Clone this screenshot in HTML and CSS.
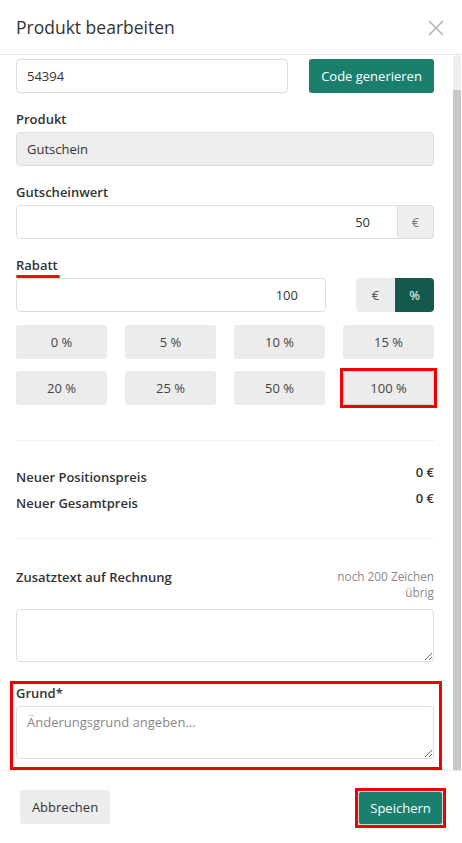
FILE: index.html
```html
<!DOCTYPE html>
<html lang="de">
<head>
<meta charset="utf-8">
<link rel="stylesheet" href="styles.css">
</head>
<body>
<div class="modal">
  <header class="modal-header">
    <h1 class="title">Produkt bearbeiten</h1>
    <button class="close" aria-label="Schließen">
      <svg width="16" height="16" viewBox="0 0 16 16"><path d="M1 1 L15 15 M15 1 L1 15" stroke="#b5b5b5" stroke-width="1.6" fill="none"/></svg>
    </button>
  </header>
  <div class="modal-main">
    <div class="content">
      <div class="code-row">
        <div class="input code-input">54394</div>
        <button class="btn btn-primary">Code generieren</button>
      </div>

      <label class="label">Produkt</label>
      <div class="input disabled">Gutschein</div>

      <label class="label">Gutscheinwert</label>
      <div class="input-group">
        <div class="input right grow">50</div>
        <div class="addon">€</div>
      </div>

      <label class="label"><span class="mark">Rabatt</span></label>
      <div class="rabatt-row">
        <div class="input right rabatt-input">100</div>
        <div class="toggle">
          <button class="tog">€</button>
          <button class="tog active">%</button>
        </div>
      </div>

      <div class="presets">
        <button class="preset">0 %</button>
        <button class="preset">5 %</button>
        <button class="preset">10 %</button>
        <button class="preset">15 %</button>
        <button class="preset">20 %</button>
        <button class="preset">25 %</button>
        <button class="preset">50 %</button>
        <button class="preset highlighted">100 %</button>
      </div>

      <hr class="divider first">

      <div class="prices">
        <div class="price-row">
          <span class="price-label">Neuer Positionspreis</span>
          <span class="price-value">0 €</span>
        </div>
        <div class="price-row">
          <span class="price-label">Neuer Gesamtpreis</span>
          <span class="price-value">0 €</span>
        </div>
      </div>

      <hr class="divider second">

      <div class="zusatz-head">
        <span class="label-inline">Zusatztext auf Rechnung</span>
        <span class="counter">noch 200 Zeichen<br>übrig</span>
      </div>
      <textarea class="textarea zusatz"></textarea>

      <div class="grund-box">
        <label class="label grund-label">Grund*</label>
        <textarea class="textarea grund" placeholder="Änderungsgrund angeben..."></textarea>
      </div>
    </div>
    <div class="scrollbar">
      <div class="thumb"></div>
    </div>
  </div>
  <footer class="modal-footer">
    <button class="btn btn-light">Abbrechen</button>
    <button class="btn btn-primary save">Speichern</button>
  </footer>
</div>
</body>
</html>
```

FILE: styles.css
```css
* { box-sizing: border-box; }
html, body { margin: 0; padding: 0; background: #fff; }
body {
  font-family: "Open Sans", "Noto Sans", sans-serif;
  color: #333;
  font-size: 13px;
  width: 462px;
  height: 843px;
  overflow: hidden;
}
.modal { display: flex; flex-direction: column; height: 843px; }

.modal-header {
  height: 55px;
  border-bottom: 1px solid #e9e9e9;
  display: flex;
  align-items: center;
  justify-content: space-between;
  padding: 0 18px 0 16px;
  flex: none;
}
.title { margin: 0; font-size: 17.5px; font-weight: 400; color: #333; }
.close { border: 0; background: none; padding: 0; display: flex; margin-top: 1px; }

.modal-main { flex: none; height: 715px; display: flex; overflow: hidden; }
.content { flex: 1; padding: 4px 19px 0 16px; display: flex; flex-direction: column; }
.scrollbar {
  width: 8px;
  margin-right: 1px;
  background: #eeeeee;
  border-radius: 4px 4px 0 0;
  display: flex;
  flex-direction: column;
  padding-top: 35px;
}
.thumb { flex: 1; background: #c8c8c8; }

.input {
  height: 34px;
  border: 1px solid #dddddd;
  border-radius: 4px;
  padding: 0 10px;
  display: flex;
  align-items: center;
  font-size: 13px;
  color: #333;
  background: #fff;
}
.input.right { justify-content: flex-end; padding-right: 27px; }
.input.disabled { background: #eeeeee; }

.code-row { display: flex; justify-content: space-between; }
.code-input { width: 272px; }

.btn {
  font-family: inherit;
  font-size: 13px;
  height: 34px;
  border: 0;
  border-radius: 3px;
  padding: 0;
  white-space: nowrap;
}
.btn-primary { background: #1b7f6e; color: #fff; width: 125px; }
.btn-light { background: #ececec; color: #333; width: 90px; }

.label {
  display: block;
  font-weight: 600;
  font-size: 13px;
  line-height: 20px;
  margin: 16px 0 3px;
}
.mark { display: inline-block; position: relative; }
.mark::after {
  content: "";
  position: absolute;
  left: 0; right: -2px;
  bottom: -3px;
  height: 3px;
  border-radius: 2px;
  background: #e8130f;
}

.input-group { display: flex; }
.input-group .grow { flex: 1; border-radius: 4px 0 0 4px; }
.addon {
  width: 36px;
  height: 34px;
  background: #eeeeee;
  border: 1px solid #dddddd;
  border-left: 0;
  border-radius: 0 4px 4px 0;
  display: flex; align-items: center; justify-content: center;
  color: #777;
}

.rabatt-row { display: flex; justify-content: space-between; }
.rabatt-input { width: 310px; }
.toggle { display: flex; }
.tog {
  width: 39px; height: 34px; border: 0;
  background: #ececec; color: #555;
  font-family: inherit; font-size: 13px;
}
.tog:first-child { border-radius: 4px 0 0 4px; }
.tog.active { background: #13594c; color: #fff; border-radius: 0 4px 4px 0; }

.presets {
  display: grid;
  grid-template-columns: repeat(4, 1fr);
  column-gap: 18px;
  row-gap: 12px;
  margin-top: 13px;
}
.preset {
  height: 34px; border: 0; border-radius: 3px;
  background: #ececec; color: #444;
  font-family: inherit; font-size: 13px;
}
.highlighted, .save { position: relative; }
.highlighted { border: 1px solid #d2d2d2; }
.highlighted::after, .save::after {
  content: "";
  position: absolute;
  inset: -4px;
  border: 3px solid #f00000;
}

.divider { border: 0; border-top: 1px solid #eeeeee; margin: 0; width: 100%; }
.divider.first { margin-top: 35px; }
.divider.second { margin-top: 19px; }

.prices { margin-top: 26px; }
.price-row { display: flex; justify-content: space-between; height: 26px; }
.price-label { font-weight: 600; line-height: 20px; }
.price-value { font-weight: 600; line-height: 20px; margin-top: -5px; }

.zusatz-head { display: flex; justify-content: space-between; margin-top: 28px; }
.label-inline { font-weight: 600; line-height: 20px; }
.counter { font-size: 11.8px; line-height: 16px; color: #8a8a8a; text-align: right; margin-top: 1px; }
.textarea {
  display: block;
  width: 100%;
  border: 1px solid #dddddd;
  border-radius: 4px;
  font-family: inherit;
  font-size: 13px;
  color: #333;
  padding: 6px 10px;
  resize: vertical;
}
.textarea::placeholder { color: #888; }
.zusatz { height: 53px; margin-top: 9px; }

.grund-box {
  margin: 19px -8px 0 -6px;
  border: 3px solid #f00000;
  padding: 0 5px 8px 3px;
}
.grund-label { margin: 0 0 4px; line-height: 18px; }
.grund { height: 53px; }

.modal-footer {
  flex: 1;
  border-top: 1px solid #eeeeee;
  display: flex;
  justify-content: space-between;
  align-items: flex-start;
  padding: 19px 19px 0 20px;
}
.save {
  width: 85px;
  margin-top: 1px;
  border: 1px solid #bfe0d9;
}
```
